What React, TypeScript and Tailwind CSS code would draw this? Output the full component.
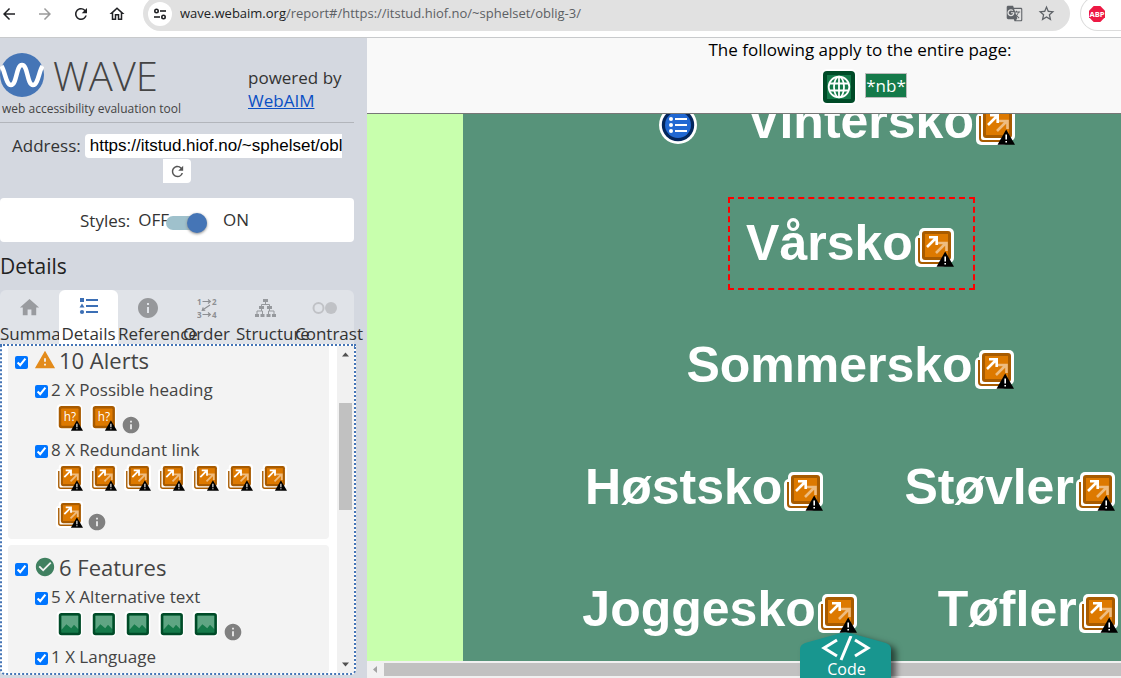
import React from "react";
import { MdArrowBack, MdArrowForward, MdRefresh, MdOutlineHome, MdStarBorder, MdGTranslate, MdHome, MdInfo, MdWarning, MdCheckCircle } from "react-icons/md";

function WarningMark() {
  return (
    <>
      <path d="M21.5 38.7 L30.2 23.5 L39 38.7 Z" fill="#000" />
      <path d="M30.2 28.5 V33.5 M30.2 35 V36.500" stroke="#fff" strokeWidth="1.6" />
    </>
  );
}

function RedundantIcon({ className }: { className: string }) {
  return (
    <svg viewBox="0 0 39 39" className={className} aria-label="Redundant link" role="img">
      <rect x="0" y="7" width="32" height="32" rx="5" fill="#fff" />
      <rect x="4" y="0" width="35" height="35" rx="5" fill="#fff" />
      <path d="M4 10 V32 Q4 35 7 35 H29" fill="none" stroke="#a85b00" strokeWidth="2" />
      <rect x="7" y="3" width="29" height="29" rx="3" fill="#a85b00" />
      <rect x="10" y="6" width="23" height="23" fill="#dd7900" />
      <g fill="none" strokeWidth="2.6">
        <path d="M21 25 L31 15 M23 15 H31.5 V23" stroke="#fff" opacity="0.5" />
        <path d="M12 19 L22 9 M14 9.3 H21.7 V17" stroke="#fff" />
      </g>
      <WarningMark />
    </svg>
  );
}

function HeadingIcon() {
  return (
    <svg viewBox="0 0 39 39" className="size-[27px]" role="img" aria-label="Possible heading">
      <rect x="1" y="0" width="37" height="37" rx="6" fill="#fff" />
      <rect x="4" y="3" width="32" height="32" rx="4" fill="#a85b00" />
      <rect x="7.5" y="6.5" width="25" height="25" rx="1" fill="#dd7900" />
      <text x="20" y="24" textAnchor="middle" fontSize="17" fill="#fff" fontFamily="Open Sans, sans-serif">h?</text>
      <WarningMark />
    </svg>
  );
}

function ImageIcon() {
  return (
    <svg viewBox="0 0 39 39" className="size-[27px]" role="img" aria-label="Alternative text">
      <rect x="1" y="0" width="37" height="37" rx="6" fill="#fff" />
      <rect x="4" y="3" width="32" height="32" rx="4" fill="#004b28" />
      <rect x="7.5" y="6.5" width="25" height="25" rx="1" fill="#157a4a" />
      <path d="M8 7 H32 V26 L26 20 L22 25 L15 19 L8 27 Z" fill="#5fa583" />
    </svg>
  );
}

function GlobeIcon() {
  return (
    <svg viewBox="0 0 36 36" className="size-9" role="img" aria-label="Language">
      <rect width="36" height="36" rx="6" fill="#fff" />
      <rect x="2" y="2" width="32" height="32" rx="4" fill="#004b28" />
      <rect x="6" y="6" width="24" height="24" fill="#157a4a" />
      <g fill="none" stroke="#fff" strokeWidth="1.8">
        <circle cx="18" cy="18" r="10.3" />
        <ellipse cx="18" cy="18" rx="5" ry="10.3" />
        <path d="M18 7.7 V28.3 M9 14.500 H27 M9 21.500 H27" />
      </g>
    </svg>
  );
}

function ListBadge() {
  return (
    <svg viewBox="0 0 38 38" className="mt-1.5 size-[38px] shrink-0" role="img" aria-label="Unordered list">
      <circle cx="19" cy="19" r="19" fill="#fff" />
      <circle cx="19" cy="19" r="16.2" fill="#04265c" />
      <circle cx="19" cy="19" r="13" fill="#2168d2" />
      <g fill="#fff">
        <circle cx="12" cy="13" r="2" /><circle cx="12" cy="19" r="2" /><circle cx="12" cy="25" r="2" />
        <path d="M16 12h12v2H16z M16 18h12v2H16z M16 24h12v2H16z" />
      </g>
    </svg>
  );
}

function BrowserBar() {
  return (
    <header className="flex h-[38px] shrink-0 items-start border-b border-[#c8cacc] bg-white font-['Open_Sans',sans-serif]">
      <nav aria-label="Browser" className="flex h-7 w-[143px] shrink-0 items-center gap-[18px] text-[#202124]">
        <button aria-label="Back"><MdArrowBack size={18} /></button>
        <button aria-label="Forward" className="text-[#9b9b9b]"><MdArrowForward size={18} /></button>
        <button aria-label="Reload"><MdRefresh size={18} /></button>
        <button aria-label="Home"><MdOutlineHome size={18} /></button>
      </nav>
      <div className="-mt-1 flex h-[35px] min-w-0 flex-1 items-center rounded-full bg-[#e1e1e1] pr-[14px] pl-[5px]">
        <button aria-label="Site information" className="flex size-6 items-center justify-center rounded-full bg-white">
          <svg viewBox="0 0 14 12" className="h-3 w-[14px]" fill="none" stroke="#202124" strokeWidth="1.6">
            <circle cx="3.5" cy="3" r="1.7" /><path d="M7 3 H13" />
            <circle cx="10.5" cy="9" r="1.7" /><path d="M1 9 H7" />
          </svg>
        </button>
        <p className="ml-2 flex-1 truncate text-[13px] text-[#5c6064]">
          <span className="text-[#202124]">wave.webaim.org</span>/report#/https://itstud.hiof.no/~sphelset/oblig-3/
        </p>
        <button aria-label="Translate" className="text-[#5f6368]"><MdGTranslate size={17} /></button>
        <button aria-label="Bookmark" className="ml-[14px] text-[#5f6368]"><MdStarBorder size={19} /></button>
      </div>
      <div className="-mt-1 ml-[10px] flex h-[35px] w-[41px] shrink-0 items-center rounded-l-full border border-r-0 border-[#dcdcdc] pl-2">
        <svg viewBox="0 0 16 16" className="size-4" role="img" aria-label="ABP">
          <path d="M4.7 0h6.6L16 4.7v6.6L11.3 16H4.7L0 11.3V4.7Z" fill="#ed1944" />
          <text x="8" y="10.8" textAnchor="middle" fontSize="7.6" fontWeight="700" fill="#fff" fontFamily="Open Sans, sans-serif">ABP</text>
        </svg>
      </div>
    </header>
  );
}

function OrderIcon() {
  return (
    <svg viewBox="0 0 20 20" className="size-5" fill="none" stroke="#8d8f93" strokeWidth="1.1">
      <g fill="#8d8f93" stroke="none" fontSize="8" fontWeight="700" fontFamily="Open Sans, sans-serif">
        <text x="0" y="6.5">1</text><text x="15" y="6.5">2</text>
        <text x="0" y="19.5">3</text><text x="15" y="19.5">4</text>
      </g>
      <path d="M5.5 3.5H13 M11 1.5l2.4 2-2.4 2 M5.5 16.5H13 M11 14.5l2.4 2-2.4 2 M13 7 L5.5 12 M6.2 9.4 L5.2 12.3 L8.3 12.2" />
    </svg>
  );
}

function StructureIcon() {
  return (
    <svg viewBox="0 0 21 20" className="h-5 w-[21px]" fill="#96999d">
      <path d="M8 1h5v3H8z M4 8h5v3H4z M12 8h5v3h-5z M0 16h4v3H0z M5.5 16h4v3h-4z M11.5 16h4v3h-4z M17 16h4v3h-4z" />
      <path d="M10.5 4v2.5 M6.5 8V6.5h8V8 M6.5 11v2 M2 16v-3h5.500v3 M14.500 11v2 M13.500 16v-3H19v3" fill="none" stroke="#96999d" />
    </svg>
  );
}

const tabs: { label: string; icon: React.ReactNode; active?: boolean }[] = [
  { label: "Summary", icon: <MdHome size={23} color="#999b9f" /> },
  {
    label: "Details",
    active: true,
    icon: (
      <svg viewBox="0 0 20 18" className="mb-1 h-[18px] w-5" fill="#3c6fb5">
        <path d="M1 1h4v4H1z M3 6.500l2.500 4h-5z M7 2h12v2H7z M7 8h12v2H7z M7 14h12v2H7z" />
        <circle cx="3" cy="15" r="2.100" />
      </svg>
    ),
  },
  { label: "Reference", icon: <MdInfo size={24} color="#96989b" /> },
  { label: "Order", icon: <OrderIcon /> },
  { label: "Structure", icon: <StructureIcon /> },
  {
    label: "Contrast",
    icon: (
      <svg viewBox="0 0 26 14" className="h-[14px] w-[26px]">
        <circle cx="6.500" cy="7" r="5" fill="none" stroke="#c0c2c6" strokeWidth="2" />
        <circle cx="19" cy="7" r="6" fill="#c0c2c6" />
      </svg>
    ),
  },
];

function GroupHeading({ id, icon, text }: { id: string; icon: React.ReactNode; text: string }) {
  return (
    <h3 className="flex h-[34px] items-center pl-0.5 text-[22px] leading-[34px] text-[#444]">
      <input id={id} type="checkbox" defaultChecked className="mt-1 size-[13px] accent-[#0075ff]" />
      <label htmlFor={id} className="ml-1.5 flex items-center gap-[3px]">{icon}{text}</label>
    </h3>
  );
}

function ItemRow({ id, text, children }: { id: string; text: string; children?: React.ReactNode }) {
  return (
    <li>
      <div className="flex h-6 items-center pl-[22px]">
        <input id={id} type="checkbox" defaultChecked className="mt-1 size-[13px] accent-[#0075ff]" />
        <label htmlFor={id} className="ml-[3px] pt-0.5 text-[17px] leading-6 text-[#444]">{text}</label>
      </div>
      {children && (
        <div className="flex flex-wrap items-start gap-x-[7px] gap-y-[10px] pt-[3px] pr-2 pb-1 pl-[43px]">
          {children}
          <button aria-label={"About " + text} className="mt-[11px] -ml-[3px] h-[18px] text-[#808080]"><MdInfo size={20} /></button>
        </div>
      )}
    </li>
  );
}

function Sidebar() {
  return (
    <aside className="flex w-[367px] shrink-0 flex-col bg-[#d4d8e0] pr-[11px] pb-[3px] text-[17px] text-[#333]">
      <div className="mr-0.5 flex h-[85px] shrink-0 border-b border-[#b2b5bb]">
        <div className="w-[248px] pt-[15px]">
          <div className="flex h-11 items-center">
            <svg viewBox="0 0 44 44" className="size-11" aria-hidden="true">
              <circle cx="22" cy="22" r="22" fill="#4575b6" />
              <path d="M1.500 13 C5 18 6 32 11 32 C17 32 16 12 22 12 C28 12 27 32 33 32 C38 32 39 18 42.500 13" fill="none" stroke="#fff" strokeWidth="4.500" />
            </svg>
            <h1 className="ml-[9px] pt-0.5 text-[40px] leading-[44px] font-light text-[#444]">WAVE</h1>
          </div>
          <p className="pl-0.5 text-[12px] leading-6 text-[#444]">web accessibility evaluation tool</p>
        </div>
        <p className="pt-7 leading-[23px]">powered by<br /><a href="#webaim" className="text-[#0a4fc4] underline">WebAIM</a></p>
      </div>
      <form className="flex shrink-0 flex-wrap items-center justify-center pt-[11px] pr-[14px] pl-3">
        <label htmlFor="address" className="leading-6">Address:</label>
        <input id="address" type="text" defaultValue="https://itstud.hiof.no/~sphelset/oblig-3/" className="ml-1 h-6 min-w-0 flex-1 rounded-l bg-white pl-[5px] font-['Liberation_Sans',sans-serif] text-[17px] text-black" />
        <span className="h-px basis-full" />
        <button type="button" aria-label="Reload report" className="flex h-6 w-7 items-center justify-center rounded-r bg-white text-[#555]"><MdRefresh size={17} /></button>
      </form>
      <div className="mt-[15px] mr-0.5 flex h-11 shrink-0 items-center rounded bg-white pl-20">
        <label htmlFor="styles" className="pt-0.5">Styles:</label>
        <span className="ml-2">OFF</span>
        <input id="styles" type="checkbox" role="switch" defaultChecked className="relative mt-1.5 -ml-[3px] h-[14px] w-[41px] appearance-none rounded-full bg-[#9fc1cc] before:absolute before:-top-[3px] before:right-0 before:size-5 before:rounded-full before:bg-[#4575b6] before:shadow-[0_1px_3px_#888]" />
        <span className="ml-4">ON</span>
      </div>
      <h2 className="h-12 shrink-0 text-[21px] leading-[48px] text-[#222]">Details</h2>
      <div role="tablist" className="mr-0.5 grid h-[54px] shrink-0 grid-cols-6 overflow-visible rounded-t-md bg-[#e0e3e8]">
        {tabs.map((tab) => (
          <button
            key={tab.label}
            role="tab"
            aria-selected={!!tab.active}
            className={"flex min-w-0 flex-col text-[#333] " + (tab.active ? "rounded-t-md bg-white" : "")}
          >
            <span className="flex h-[35px] w-full items-center justify-center">{tab.icon}</span>
            <span className={"h-[18px] leading-[18px] " + (tab.label === "Details" || tab.label === "Order" ? "self-center" : "self-start")}>{tab.label}</span>
          </button>
        ))}
      </div>
      <div className="flex min-h-0 flex-1 overflow-hidden rounded-b-[5px] border-2 border-dotted border-[#4575b6] bg-white">
        <div className="min-w-0 flex-1 overflow-hidden pr-2 pl-1.5">
          <div className="-mt-2 flex flex-col gap-1.5">
            <section className="rounded bg-[#f3f3f3] p-[5px]">
              <GroupHeading id="alerts" icon={<MdWarning size={22} color="#e38b1b" />} text="10 Alerts" />
              <ul>
                <ItemRow id="possible" text="2 X Possible heading">
                  <HeadingIcon /><HeadingIcon />
                </ItemRow>
                <ItemRow id="redundant" text="8 X Redundant link">
                  {Array.from({ length: 8 }, (_, i) => <RedundantIcon key={i} className="size-[27px]" />)}
                </ItemRow>
              </ul>
            </section>
            <section className="rounded bg-[#f3f3f3] p-[5px]">
              <GroupHeading id="features" icon={<MdCheckCircle size={22} color="#408060" />} text="6 Features" />
              <ul>
                <ItemRow id="alt" text="5 X Alternative text">
                  {Array.from({ length: 5 }, (_, i) => <ImageIcon key={i} />)}
                </ItemRow>
                <ItemRow id="language" text="1 X Language" />
              </ul>
            </section>
          </div>
        </div>
        <div className="flex w-[17px] shrink-0 flex-col items-center bg-[#f1f1f1]">
          <svg viewBox="0 0 17 17" className="size-[17px] shrink-0"><path d="M5 10.500 8.500 6.500 12 10.500Z" fill="#505050" /></svg>
          <div className="mt-10 h-[107px] w-[13px] bg-[#c1c1c1]" />
          <svg viewBox="0 0 17 17" className="mt-auto size-[17px] shrink-0"><path d="M5 6.500 8.500 10.500 12 6.500Z" fill="#505050" /></svg>
        </div>
      </div>
    </aside>
  );
}

function ShoeLink({ name, highlighted }: { name: string; highlighted?: boolean }) {
  return (
    <a href="#sko" className={"flex h-[93px] items-center border-2 border-dashed px-4 " + (highlighted ? "border-[#ff0000]" : "border-transparent")}>
      {name}
      <RedundantIcon className="mt-2 mr-[3px] ml-0.5 size-[39px]" />
    </a>
  );
}

function Preview() {
  return (
    <main className="relative flex min-w-0 flex-1 flex-col">
      <div className="flex h-[76px] shrink-0 flex-col items-center border-b border-[#777] bg-[#f9f9f9] pl-[232px] text-[17px] text-black">
        <p className="leading-6">The following apply to the entire page:</p>
        <div className="mt-[7px] ml-2 flex items-center gap-2">
          <GlobeIcon />
          <span className="mb-1 h-[25px] border border-[#bbb] bg-[#157a4a] leading-[23px] text-white">*nb*</span>
        </div>
      </div>
      <div className="flex min-h-0 flex-1 overflow-hidden bg-[#c8ffad] pl-24">
        <div className="-mt-[39px] flex w-[777px] shrink-0 flex-col gap-[29px] bg-[#57937a] font-['Liberation_Sans',sans-serif] text-[50px] leading-[57px] font-bold text-white">
          <div className="flex items-center justify-center gap-[32px] pr-2"><ListBadge /><ShoeLink name="Vintersko" /></div>
          <div className="flex justify-center"><ShoeLink name="Vårsko" highlighted /></div>
          <div className="flex justify-center"><ShoeLink name="Sommersko" /></div>
          <div className="flex justify-center gap-[42px]"><ShoeLink name="Høstsko" /><ShoeLink name="Støvler" /></div>
          <div className="flex justify-center gap-[42px]"><ShoeLink name="Joggesko" /><ShoeLink name="Tøfler" /></div>
        </div>
      </div>
      <div className="flex h-[17px] shrink-0 items-center bg-[#f1f1f1]">
        <svg viewBox="0 0 17 17" className="size-[17px]"><path d="M10 5 6 8.500 10 12Z" fill="#a3a3a3" /></svg>
        <div className="h-[13px] flex-1 bg-[#c1c1c1]" />
      </div>
      <button className="absolute bottom-0 left-[433px] h-[46px] w-[91px] text-white">
        <svg viewBox="0 0 91 46" className="absolute inset-0 h-[46px] w-[91px] overflow-visible drop-shadow-[5px_3px_3px_rgba(0,0,0,0.55)]">
          <path d="M0 46V17Q0 13 5 11L41 1Q45.500 0 50 1L86 11Q91 13 91 17V46Z" fill="#18968f" />
        </svg>
        <svg viewBox="0 0 50 26" className="absolute top-1 left-[21px] h-[26px] w-[50px]" fill="none" stroke="#fff" strokeWidth="3">
          <path d="M16 4 3 12 16 20 M34 4 47 12 34 20 M30 0 20 24" />
        </svg>
        <span className="relative block pt-[27px] pl-0.5 text-[16px] leading-5">Code</span>
      </button>
    </main>
  );
}

export default function App() {
  return (
    <div className="flex h-screen flex-col overflow-hidden bg-white">
      <BrowserBar />
      <div className="flex min-h-0 flex-1 font-['Open_Sans',sans-serif]">
        <Sidebar />
        <Preview />
      </div>
    </div>
  );
}
